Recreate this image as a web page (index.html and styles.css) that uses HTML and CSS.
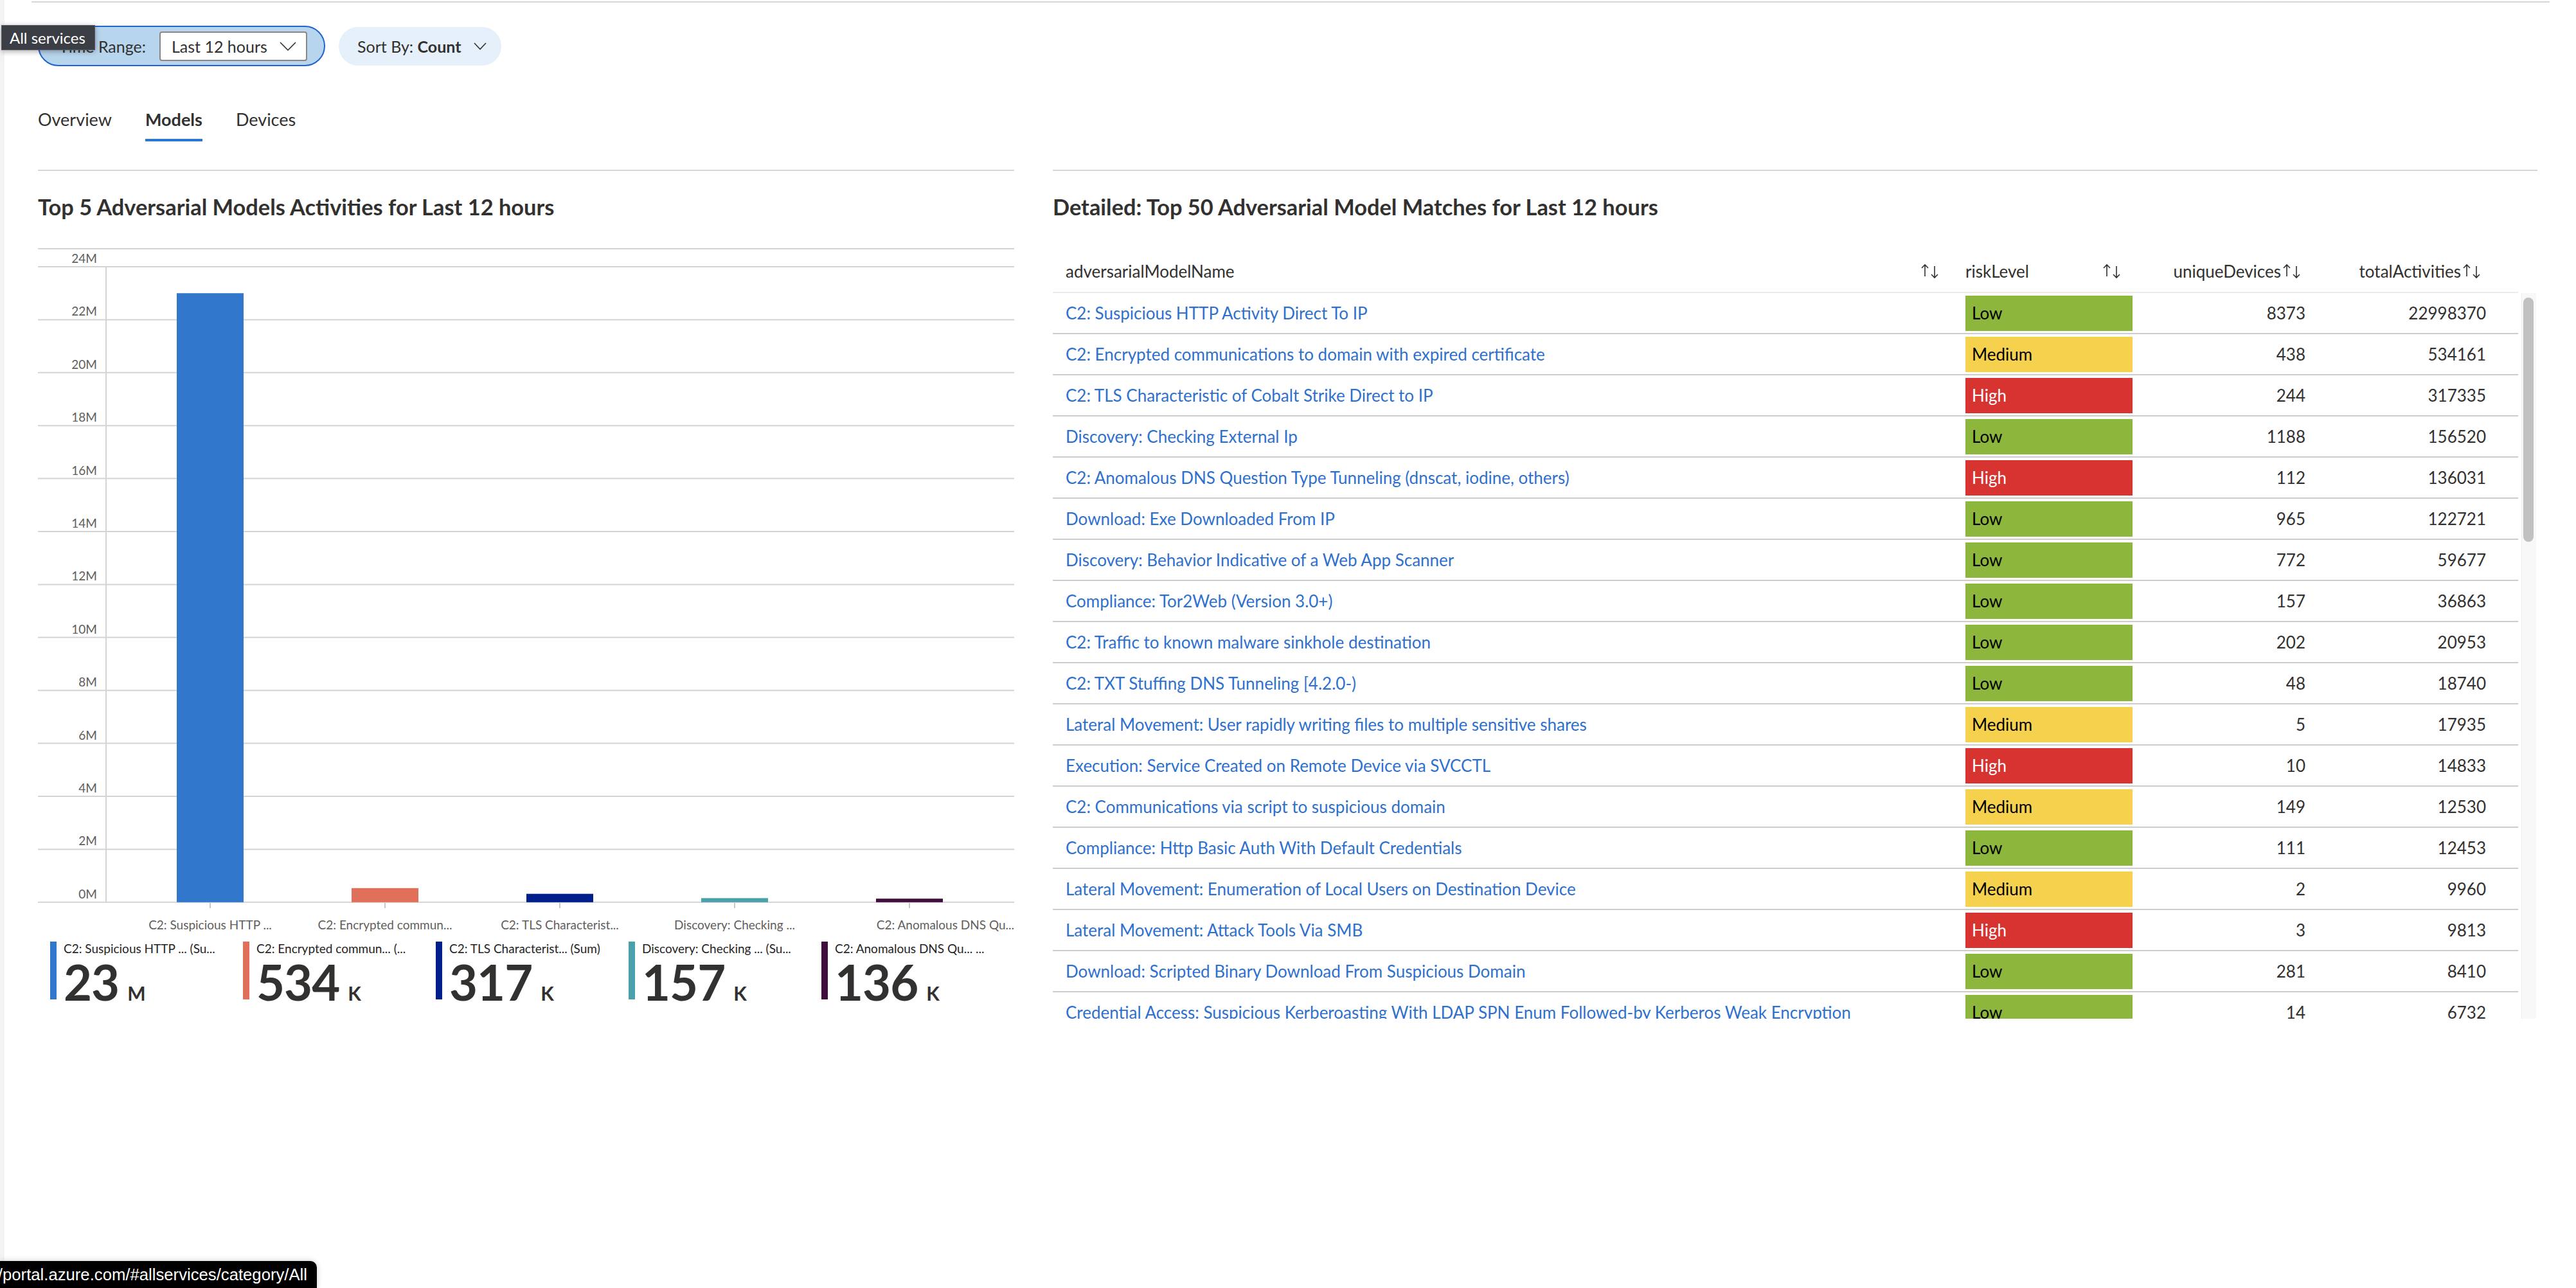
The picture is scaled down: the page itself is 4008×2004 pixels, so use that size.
FILE: index.html
```html
<!DOCTYPE html>
<html lang="en">
<head>
<meta charset="utf-8">
<title>Adversarial Models</title>
<link rel="stylesheet" href="styles.css">
</head>
<body>
<div class="app">
  <div class="rail"></div>
  <div class="main">
    <div class="topline"></div>

    <div class="toolbar">
      <div class="pill pill-active">
        <span class="pill-label">Time Range:</span>
        <div class="dropdown">
          <span>Last 12 hours</span>
          <svg class="chev" width="26" height="14" viewBox="0 0 26 14"><path d="M1 1 L13 13 L25 1" fill="none" stroke="#323130" stroke-width="1.6"/></svg>
        </div>
      </div>
      <div class="pill pill-soft">
        <span>Sort By: <b>Count</b></span>
        <svg class="chev" width="20" height="12" viewBox="0 0 20 12"><path d="M1 1 L10 10.5 L19 1" fill="none" stroke="#323130" stroke-width="1.6"/></svg>
      </div>
    </div>

    <nav class="tabs">
      <span class="tab">Overview</span>
      <span class="tab active">Models</span>
      <span class="tab">Devices</span>
    </nav>

    <div class="panels">
      <section class="panel panel-chart">
        <h2 class="panel-title">Top 5 Adversarial Models Activities for Last 12 hours</h2>
        <svg class="chart" width="1519" height="1072" viewBox="0 0 1519 1072">
          <g class="grid" stroke="#d4d4d4" stroke-width="2">
            <line x1="0" y1="1" x2="1519" y2="1"/>
            <line x1="0" y1="29" x2="1519" y2="29"/>
            <line x1="0" y1="111.4" x2="1519" y2="111.4"/>
            <line x1="0" y1="193.8" x2="1519" y2="193.8"/>
            <line x1="0" y1="276.2" x2="1519" y2="276.2"/>
            <line x1="0" y1="358.6" x2="1519" y2="358.6"/>
            <line x1="0" y1="441" x2="1519" y2="441"/>
            <line x1="0" y1="523.4" x2="1519" y2="523.4"/>
            <line x1="0" y1="605.8" x2="1519" y2="605.8"/>
            <line x1="0" y1="688.2" x2="1519" y2="688.2"/>
            <line x1="0" y1="770.6" x2="1519" y2="770.6"/>
            <line x1="0" y1="853" x2="1519" y2="853"/>
            <line x1="0" y1="935.4" x2="1519" y2="935.4"/>
            <line x1="0" y1="1017.8" x2="1519" y2="1017.8"/>
            <line x1="106" y1="29" x2="106" y2="1018"/>
          </g>
          <g class="ylabels" text-anchor="end">
            <text x="92" y="23">24M</text>
            <text x="92" y="105.4">22M</text>
            <text x="92" y="187.8">20M</text>
            <text x="92" y="270.2">18M</text>
            <text x="92" y="352.6">16M</text>
            <text x="92" y="435">14M</text>
            <text x="92" y="517.4">12M</text>
            <text x="92" y="599.8">10M</text>
            <text x="92" y="682.2">8M</text>
            <text x="92" y="764.6">6M</text>
            <text x="92" y="847">4M</text>
            <text x="92" y="929.4">2M</text>
            <text x="92" y="1011.8">0M</text>
          </g>
          <g class="bars">
            <rect x="216" y="70.2" width="104" height="947.6" fill="#3178cd"/>
            <rect x="488" y="995.8" width="104" height="22" fill="#e07059"/>
            <rect x="760" y="1004.7" width="104" height="13.1" fill="#001f8b"/>
            <rect x="1032" y="1011.4" width="104" height="6.4" fill="#4aa1ab"/>
            <rect x="1304" y="1012.2" width="104" height="5.6" fill="#3f0e3d"/>
          </g>
          <g class="ticks" stroke="#c8c8c8" stroke-width="2">
            <line x1="268" y1="1019" x2="268" y2="1027"/>
            <line x1="540" y1="1019" x2="540" y2="1027"/>
            <line x1="812" y1="1019" x2="812" y2="1027"/>
            <line x1="1084" y1="1019" x2="1084" y2="1027"/>
            <line x1="1356" y1="1019" x2="1356" y2="1027"/>
          </g>
          <g class="xlabels" text-anchor="middle">
            <text x="268" y="1060">C2: Suspicious HTTP ...</text>
            <text x="540" y="1060">C2: Encrypted commun...</text>
            <text x="812" y="1060">C2: TLS Characterist...</text>
            <text x="1084" y="1060">Discovery: Checking ...</text>
            <text x="1519" y="1060" text-anchor="end">C2: Anomalous DNS Qu...</text>
          </g>
        </svg>
        <div class="legend">
          <div class="legend-item">
            <span class="stripe c1"></span>
            <div class="legend-body">
              <div class="legend-title">C2: Suspicious HTTP ... (Su...</div>
              <div class="legend-value">23<span class="unit">M</span></div>
            </div>
          </div>
          <div class="legend-item">
            <span class="stripe c2"></span>
            <div class="legend-body">
              <div class="legend-title">C2: Encrypted commun... (...</div>
              <div class="legend-value">534<span class="unit">K</span></div>
            </div>
          </div>
          <div class="legend-item">
            <span class="stripe c3"></span>
            <div class="legend-body">
              <div class="legend-title">C2: TLS Characterist... (Sum)</div>
              <div class="legend-value">317<span class="unit">K</span></div>
            </div>
          </div>
          <div class="legend-item">
            <span class="stripe c4"></span>
            <div class="legend-body">
              <div class="legend-title">Discovery: Checking ... (Su...</div>
              <div class="legend-value">157<span class="unit">K</span></div>
            </div>
          </div>
          <div class="legend-item">
            <span class="stripe c5"></span>
            <div class="legend-body">
              <div class="legend-title">C2: Anomalous DNS Qu... ...</div>
              <div class="legend-value">136<span class="unit">K</span></div>
            </div>
          </div>
        </div>
      </section>

      <section class="panel panel-table">
        <h2 class="panel-title">Detailed: Top 50 Adversarial Model Matches for Last 12 hours</h2>
        <div class="table">
          <div class="thead">
            <div class="th th-name"><span>adversarialModelName</span><svg class="sort" width="34" height="26" viewBox="0 0 34 26"><path d="M9 21 V3 M4 8 L9 3 L14 8 M24 5 V23 M19 18 L24 23 L29 18" fill="none" stroke="#323130" stroke-width="1.6"/></svg></div>
            <div class="th th-risk"><span>riskLevel</span><svg class="sort" width="34" height="26" viewBox="0 0 34 26"><path d="M9 21 V3 M4 8 L9 3 L14 8 M24 5 V23 M19 18 L24 23 L29 18" fill="none" stroke="#323130" stroke-width="1.6"/></svg></div>
            <div class="th th-num th-dev"><span>uniqueDevices</span><svg class="sort" width="34" height="26" viewBox="0 0 34 26"><path d="M9 21 V3 M4 8 L9 3 L14 8 M24 5 V23 M19 18 L24 23 L29 18" fill="none" stroke="#323130" stroke-width="1.6"/></svg></div>
            <div class="th th-num th-act"><span>totalActivities</span><svg class="sort" width="34" height="26" viewBox="0 0 34 26"><path d="M9 21 V3 M4 8 L9 3 L14 8 M24 5 V23 M19 18 L24 23 L29 18" fill="none" stroke="#323130" stroke-width="1.6"/></svg></div>
          </div>
          <div class="tbody-wrap">
            <div class="tbody">
              <div class="tr"><div class="td"><a>C2: Suspicious HTTP Activity Direct To IP</a></div><div class="td"><span class="badge low">Low</span></div><div class="td num">8373</div><div class="td num last">22998370</div></div>
              <div class="tr"><div class="td"><a>C2: Encrypted communications to domain with expired certificate</a></div><div class="td"><span class="badge medium">Medium</span></div><div class="td num">438</div><div class="td num last">534161</div></div>
              <div class="tr"><div class="td"><a>C2: TLS Characteristic of Cobalt Strike Direct to IP</a></div><div class="td"><span class="badge high">High</span></div><div class="td num">244</div><div class="td num last">317335</div></div>
              <div class="tr"><div class="td"><a>Discovery: Checking External Ip</a></div><div class="td"><span class="badge low">Low</span></div><div class="td num">1188</div><div class="td num last">156520</div></div>
              <div class="tr"><div class="td"><a>C2: Anomalous DNS Question Type Tunneling (dnscat, iodine, others)</a></div><div class="td"><span class="badge high">High</span></div><div class="td num">112</div><div class="td num last">136031</div></div>
              <div class="tr"><div class="td"><a>Download: Exe Downloaded From IP</a></div><div class="td"><span class="badge low">Low</span></div><div class="td num">965</div><div class="td num last">122721</div></div>
              <div class="tr"><div class="td"><a>Discovery: Behavior Indicative of a Web App Scanner</a></div><div class="td"><span class="badge low">Low</span></div><div class="td num">772</div><div class="td num last">59677</div></div>
              <div class="tr"><div class="td"><a>Compliance: Tor2Web (Version 3.0+)</a></div><div class="td"><span class="badge low">Low</span></div><div class="td num">157</div><div class="td num last">36863</div></div>
              <div class="tr"><div class="td"><a>C2: Traffic to known malware sinkhole destination</a></div><div class="td"><span class="badge low">Low</span></div><div class="td num">202</div><div class="td num last">20953</div></div>
              <div class="tr"><div class="td"><a>C2: TXT Stuffing DNS Tunneling [4.2.0-)</a></div><div class="td"><span class="badge low">Low</span></div><div class="td num">48</div><div class="td num last">18740</div></div>
              <div class="tr"><div class="td"><a>Lateral Movement: User rapidly writing files to multiple sensitive shares</a></div><div class="td"><span class="badge medium">Medium</span></div><div class="td num">5</div><div class="td num last">17935</div></div>
              <div class="tr"><div class="td"><a>Execution: Service Created on Remote Device via SVCCTL</a></div><div class="td"><span class="badge high">High</span></div><div class="td num">10</div><div class="td num last">14833</div></div>
              <div class="tr"><div class="td"><a>C2: Communications via script to suspicious domain</a></div><div class="td"><span class="badge medium">Medium</span></div><div class="td num">149</div><div class="td num last">12530</div></div>
              <div class="tr"><div class="td"><a>Compliance: Http Basic Auth With Default Credentials</a></div><div class="td"><span class="badge low">Low</span></div><div class="td num">111</div><div class="td num last">12453</div></div>
              <div class="tr"><div class="td"><a>Lateral Movement: Enumeration of Local Users on Destination Device</a></div><div class="td"><span class="badge medium">Medium</span></div><div class="td num">2</div><div class="td num last">9960</div></div>
              <div class="tr"><div class="td"><a>Lateral Movement: Attack Tools Via SMB</a></div><div class="td"><span class="badge high">High</span></div><div class="td num">3</div><div class="td num last">9813</div></div>
              <div class="tr"><div class="td"><a>Download: Scripted Binary Download From Suspicious Domain</a></div><div class="td"><span class="badge low">Low</span></div><div class="td num">281</div><div class="td num last">8410</div></div>
              <div class="tr"><div class="td"><a>Credential Access: Suspicious Kerberoasting With LDAP SPN Enum Followed-by Kerberos Weak Encryption</a></div><div class="td"><span class="badge low">Low</span></div><div class="td num">14</div><div class="td num last">6732</div></div>
            </div>
            <div class="scroll"><div class="track"><div class="thumb"></div></div></div>
          </div>
        </div>
      </section>
    </div>
  </div>
</div>

<div class="tooltip">All services</div>
<div class="statusbar"><span>https://portal.azure.com/#allservices/category/All</span></div>
</body>
</html>
```

FILE: styles.css
```css
* { box-sizing: border-box; }
html, body { margin: 0; padding: 0; }
body {
  width: 4008px;
  height: 2004px;
  overflow: hidden;
  position: relative;
  background: #ffffff;
  font-family: "Lato", "Open Sans", "Noto Sans", sans-serif;
  color: #323130;
}
.app { display: flex; height: 2004px; }
.rail { flex: none; width: 7px; background: #f3f3f3; }
.main { flex: 1; padding-left: 52px; }

.topline { width: 3918px; height: 2px; margin: 2px 0 0 -10px; background: #d6d6d6; }

/* toolbar */
.toolbar { display: flex; align-items: center; gap: 21px; height: 63px; margin-top: 36px; }
.pill { display: flex; align-items: center; border-radius: 40px; font-size: 25px; }
.pill-active {
  width: 447px; height: 63px;
  justify-content: flex-end; gap: 21px;
  padding-right: 26px;
  background: #b8d5ee;
  border: 2px solid #2163d0;
}
.dropdown {
  width: 230px; height: 46px;
  display: flex; align-items: center; justify-content: space-between;
  padding: 0 15px 0 17px;
  background: #ffffff;
  border: 2px solid #8a8886;
  border-radius: 4px;
}
.pill-soft {
  width: 253px; height: 60px;
  justify-content: space-between;
  padding: 0 23px 0 29px;
  background: #e6f0fa;
}
.pill-soft b { font-weight: 700; }
.chev { display: block; }

/* tabs */
.tabs { display: flex; gap: 52px; margin-top: 63px; }
.tab {
  font-size: 27px; line-height: 40px;
  padding-bottom: 10px;
  border-bottom: 4px solid transparent;
  color: #323130;
}
.tab.active { border-bottom-color: #2b78d4; font-weight: 700; }

/* panels */
.panels { display: flex; gap: 60px; margin-top: 44px; }
.panel { border-top: 2px solid #d6d6d6; }
.panel-chart { width: 1519px; }
.panel-table { width: 2310px; }
.panel-title {
  margin: 34px 0 0;
  font-size: 34.4px; line-height: 44px; font-weight: 700;
  color: #323130;
}

/* chart */
.chart { display: block; margin-top: 42px; }
.chart text { font-family: "Lato", "Open Sans", sans-serif; font-size: 19px; fill: #605e5c; }

.legend { display: flex; padding-left: 19px; margin-top: 6px; }
.legend-item { width: 310px; display: flex; align-items: flex-start; }
.stripe { flex: none; width: 10px; height: 90px; margin-top: 1px; }
.stripe.c1 { background: #3178cd; }
.stripe.c2 { background: #e07059; }
.stripe.c3 { background: #001f8b; }
.stripe.c4 { background: #4aa1ab; }
.stripe.c5 { background: #3f0e3d; }
.legend-body { margin-left: 11px; }
.legend-title { font-size: 19px; line-height: 24px; color: #252423; white-space: nowrap; }
.legend-value {
  margin-top: 2px;
  font-size: 76px; line-height: 76px; font-weight: 700;
  color: #323130; letter-spacing: -1px;
}
.legend-value .unit { font-size: 30px; margin-left: 13px; letter-spacing: 0; }

/* table */
.table { margin-top: 46px; }
.thead, .tr {
  display: grid;
  grid-template-columns: 1400px 300px 269px 311px;
  width: 2280px;
  align-items: center;
}
.thead { height: 66px; border-bottom: 2px solid #ebebeb; }
.th {
  display: flex; align-items: center; justify-content: space-between;
  padding: 0 18px 0 20px;
  font-size: 26px; color: #323130;
}
.th-risk { padding-right: 35px; }
.th-num { justify-content: flex-end; }
.th-dev { padding-right: 24px; }
.th-act { padding-right: 55px; }
.sort { display: block; flex: none; }

.tbody-wrap { display: flex; height: 1129px; }
.tbody { width: 2280px; height: 1129px; overflow: hidden; }
.tr { height: 64px; border-bottom: 2px solid #cccccc; }
.td {
  padding: 0 20px;
  font-size: 26px;
  white-space: nowrap; overflow: hidden;
  color: #323130;
}
.td a { color: #2e70cd; text-decoration: none; }
.td.num { text-align: right; }
.td.num.last { padding-right: 50px; }
.badge {
  display: flex; align-items: center;
  width: 260px; height: 55px;
  padding-left: 10px;
  color: #000000;
}
.badge.low { background: #8cb63c; }
.badge.medium { background: #f5d14e; }
.badge.high { background: #d63331; color: #ffffff; }

.scroll { width: 30px; padding-left: 5px; }
.track { width: 23px; height: 100%; background: #f8f8f8; border-left: 1px solid #ececec; padding: 7px 0 0 2px; }
.thumb { width: 16px; height: 380px; border-radius: 8px; background: #c1c1c1; }

/* overlays */
.tooltip {
  position: absolute; left: 2px; top: 39px;
  width: 146px; height: 39px;
  display: flex; align-items: center;
  padding-left: 12px;
  background: #3b3e45;
  border: 1px solid #55585f;
  box-shadow: 0 2px 8px rgba(0, 0, 0, 0.35);
  color: #ffffff;
  font-size: 24px;
}
.statusbar {
  position: absolute; left: 0; bottom: 0;
  width: 493px; height: 42px;
  display: flex; justify-content: flex-end; align-items: center;
  padding-right: 15px;
  overflow: hidden;
  background: #000000;
  border-top-right-radius: 10px;
  box-shadow: 0 0 10px rgba(0, 0, 0, 0.2);
  color: #ffffff;
  font-family: "Liberation Sans", Arial, sans-serif;
  font-size: 25.7px; line-height: 42px;
  white-space: nowrap;
}
```
